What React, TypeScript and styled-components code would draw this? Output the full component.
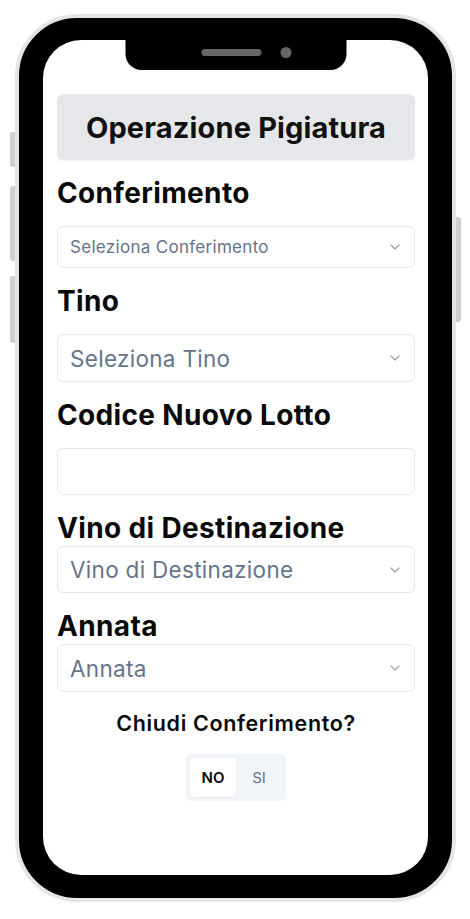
import { createGlobalStyle } from "styled-components";
import styled from "styled-components";
import { ChevronDown } from "lucide-react";

const GlobalStyle = createGlobalStyle`
    html, body {
        margin: 0;
        padding: 0;
        background: #ffffff;
    }

    body {
        font-family: Inter, "Noto Sans", sans-serif;
        color: #0a0a0a;
    }

    * {
        box-sizing: border-box;
    }
`;

const Page = styled.div`
    padding: 14px 0 0 15px;
`;

const Phone = styled.div`
    position: relative;
    width: 441px;
    height: 888px;
    border: 4px solid #e6e6e6;
    border-radius: 62px;
    background: #000;
    padding: 22px 24px 23px 24px;
    display: flex;
`;

const SideButton = styled.span<{ $side: "left" | "right"; $top: number; $height: number }>`
    position: absolute;
    top: ${(p) => p.$top}px;
    ${(p) => (p.$side === "left" ? "left: -9px;" : "right: -9px;")}
    width: 5px;
    height: ${(p) => p.$height}px;
    background: #cfcfcf;
    border-radius: ${(p) => (p.$side === "left" ? "3px 0 0 3px" : "0 3px 3px 0")};
`;

const Screen = styled.div`
    position: relative;
    flex: 1;
    background: #ffffff;
    border-radius: 38px;
    overflow: hidden;
    padding: 54px 13px 0 14px;
    display: flex;
    flex-direction: column;
    gap: 16px;
`;

const Notch = styled.div`
    position: absolute;
    top: 0;
    left: 50%;
    transform: translateX(-50%);
    width: 221px;
    height: 30px;
    background: #000;
    border-radius: 0 0 16px 16px;
    display: flex;
    justify-content: center;
    align-items: center;
    gap: 19px;
    padding: 0 0 6px 22px;
`;

const Speaker = styled.span`
    width: 60px;
    height: 7px;
    border-radius: 4px;
    background: #666;
`;

const Camera = styled.span`
    width: 11px;
    height: 11px;
    border-radius: 50%;
    background: #666;
`;

const TitleBar = styled.div`
    height: 66px;
    background: #e5e7eb;
    border-radius: 6px;
    box-shadow: 0 1px 2px rgba(0, 0, 0, 0.06);
    display: flex;
    align-items: center;
    justify-content: center;
`;

const Title = styled.h1`
    margin: 0;
    font-size: 29px;
    font-weight: 700;
    letter-spacing: 0.15px;
    color: #111;
`;

const Field = styled.div<{ $tight?: boolean }>`
    display: flex;
    flex-direction: column;
    gap: ${(p) => (p.$tight ? "1px" : "16px")};
`;

const Label = styled.h2`
    margin: 0;
    font-size: 28px;
    line-height: 34px;
    font-weight: 700;
    letter-spacing: 0.35px;
    color: #0a0a0a;
`;

const SelectBox = styled.div<{ $height: number; $size: number }>`
    height: ${(p) => p.$height}px;
    border: 1px solid #e2e8f0;
    border-radius: 6px;
    background: #fff;
    padding: 0 11px 0 12px;
    display: flex;
    align-items: center;
    justify-content: space-between;
    color: #64748b;
    font-size: ${(p) => p.$size}px;
    letter-spacing: 0.3px;

    svg {
        color: #0a0a0a;
        opacity: 0.4;
    }
`;

const TextInput = styled.input`
    height: 47px;
    border: 1px solid #e2e8f0;
    border-radius: 6px;
    background: #fff;
    padding: 0 12px;
    font-family: inherit;
    font-size: 22px;
    outline: none;
`;

const CloseBlock = styled.div`
    display: flex;
    flex-direction: column;
    align-items: center;
    gap: 18px;
    margin-top: 2px;
`;

const Question = styled.p`
    margin: 0;
    font-size: 21.5px;
    font-weight: 600;
    letter-spacing: 0.65px;
    color: #0a0a0a;
`;

const Toggle = styled.div`
    display: flex;
    padding: 4px;
    background: #f1f5f9;
    border-radius: 6px;
`;

const ToggleButton = styled.button<{ $active?: boolean }>`
    width: 46px;
    height: 39px;
    border: none;
    border-radius: 4px;
    font-family: inherit;
    font-size: 15px;
    font-weight: ${(p) => (p.$active ? 600 : 400)};
    color: ${(p) => (p.$active ? "#0a0a0a" : "#64748b")};
    background: ${(p) => (p.$active ? "#ffffff" : "transparent")};
    box-shadow: ${(p) => (p.$active ? "0 1px 2px rgba(0,0,0,0.05)" : "none")};
`;

function Select({ text, height, size }: { text: string; height: number; size: number }) {
    return (
        <SelectBox $height={height} $size={size}>
            <span>{text}</span>
            <ChevronDown size={16} strokeWidth={1.75} />
        </SelectBox>
    );
}

export default function App() {
    return (
        <>
            <GlobalStyle />
            <Page>
                <Phone>
                    <SideButton $side="left" $top={114} $height={35} />
                    <SideButton $side="left" $top={168} $height={75} />
                    <SideButton $side="left" $top={258} $height={67} />
                    <SideButton $side="right" $top={199} $height={105} />
                    <Screen>
                        <Notch>
                            <Speaker />
                            <Camera />
                        </Notch>

                        <TitleBar>
                            <Title>Operazione Pigiatura</Title>
                        </TitleBar>

                        <Field>
                            <Label>Conferimento</Label>
                            <Select text="Seleziona Conferimento" height={42} size={17} />
                        </Field>

                        <Field>
                            <Label>Tino</Label>
                            <Select text="Seleziona Tino" height={48} size={22.5} />
                        </Field>

                        <Field>
                            <Label>Codice Nuovo Lotto</Label>
                            <TextInput />
                        </Field>

                        <Field $tight>
                            <Label>Vino di Destinazione</Label>
                            <Select text="Vino di Destinazione" height={47} size={22.5} />
                        </Field>

                        <Field $tight>
                            <Label>Annata</Label>
                            <Select text="Annata" height={48} size={22.5} />
                        </Field>

                        <CloseBlock>
                            <Question>Chiudi Conferimento?</Question>
                            <Toggle>
                                <ToggleButton $active>NO</ToggleButton>
                                <ToggleButton>SI</ToggleButton>
                            </Toggle>
                        </CloseBlock>
                    </Screen>
                </Phone>
            </Page>
        </>
    );
}
